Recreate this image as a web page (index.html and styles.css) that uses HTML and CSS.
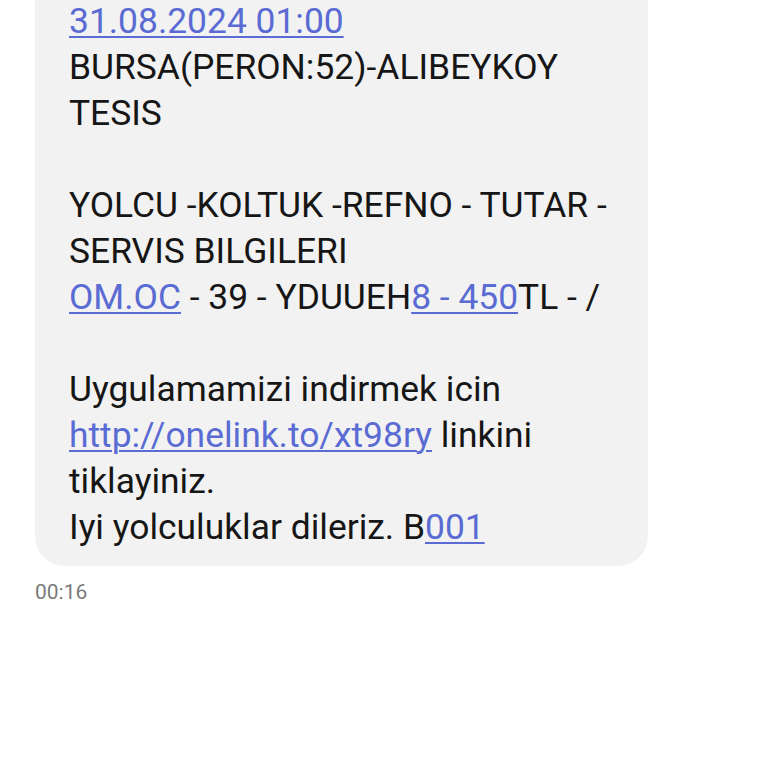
FILE: index.html
```html
<!DOCTYPE html>
<html lang="tr">
<head>
<meta charset="utf-8">
<link rel="stylesheet" href="styles.css">
</head>
<body>
<div class="thread">
  <div class="bubble">
    <p class="msg"><a class="lnk" href="#">31.08.2024 01:00</a><br>BURSA(PERON:52)-ALIBEYKOY TESIS<br><br>YOLCU -KOLTUK -REFNO - TUTAR - SERVIS BILGILERI<br><a class="lnk" href="#">OM.OC</a> - 39 - YDUUEH<a class="lnk" href="#">8 - 450</a>TL - /<br><br>Uygulamamizi indirmek icin <a class="lnk" href="#">http://onelink.to/xt98ry</a> linkini tiklayiniz.<br>Iyi yolculuklar dileriz. B<a class="lnk" href="#">001</a></p>
  </div>
  <div class="time">00:16</div>
</div>
</body>
</html>
```
FILE: styles.css
```css
html, body {
  margin: 0;
  padding: 0;
  background: #ffffff;
}
.thread {
  padding: 0 0 0 35px;
  display: flex;
  flex-direction: column;
  align-items: flex-start;
}
.bubble {
  width: 613px;
  box-sizing: border-box;
  margin-top: -40px;
  padding: 38px 28px 16px 34px;
  background: #f2f2f2;
  border-radius: 30px;
}
.msg {
  margin: 0;
  font-family: Roboto, "Noto Sans", sans-serif;
  font-size: 35.4px;
  line-height: 46px;
  color: #161616;
}
.lnk {
  color: #5a6bd3;
  text-decoration: underline;
  text-decoration-thickness: 2px;
  text-underline-offset: 3px;
}
.time {
  margin-top: 13px;
  font-family: Roboto, "Noto Sans", sans-serif;
  font-size: 21px;
  line-height: 26px;
  color: #7a7a7a;
}
```
